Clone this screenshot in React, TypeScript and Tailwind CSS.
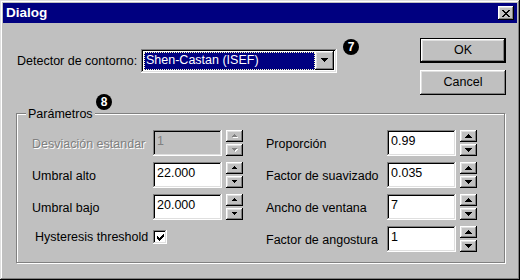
const raised =
  "bg-[#c0c0c0] shadow-[inset_-1px_-1px_#000,inset_1px_1px_#fff,inset_-2px_-2px_#808080,inset_2px_2px_#dfdfdf]";
const sunken =
  "shadow-[inset_-1px_-1px_#fff,inset_1px_1px_#808080,inset_-2px_-2px_#dfdfdf,inset_2px_2px_#000]";

function Badge({ n }: { n: string }) {
  return (
    <div className="w-[16px] h-[16px] rounded-full bg-black text-white font-bold text-[12px] leading-none flex items-center justify-center">
      {n}
    </div>
  );
}

function Arrow({ up, big, disabled }: { up?: boolean; big?: boolean; disabled?: boolean }) {
  const w = big ? 7 : 5;
  const h = big ? 4 : 3;
  const pts = up ? `0,${h} ${w},${h} ${w / 2},0` : `0,0 ${w},0 ${w / 2},${h}`;
  return (
    <svg width={w + 1} height={h + 1} viewBox={`0 0 ${w + 1} ${h + 1}`} shapeRendering="crispEdges">
      {disabled && <polygon points={pts} fill="#fff" transform="translate(1,1)" />}
      <polygon points={pts} fill={disabled ? "#808080" : "#000"} />
    </svg>
  );
}

function Spinner({ big, disabled }: { big?: boolean; disabled?: boolean }) {
  return (
    <div className="flex flex-col gap-[2px] w-[17px]">
      <div className={`h-[12px] flex items-center justify-center ${raised}`}>
        <Arrow up big={big} disabled={disabled} />
      </div>
      <div className={`h-[12px] flex items-center justify-center ${raised}`}>
        <Arrow big={big} disabled={disabled} />
      </div>
    </div>
  );
}

function Field({
  label,
  value,
  disabled,
  right,
}: {
  label: string;
  value: string;
  disabled?: boolean;
  right?: boolean;
}) {
  return (
    <div className="flex items-center h-[26px]">
      <span
        className={`w-[121px] pt-[3px] whitespace-nowrap ${
          disabled ? "text-[#808080] [text-shadow:1px_1px_0_#fff]" : "text-black"
        }`}
      >
        {label}
      </span>
      <div
        className={`w-[69px] h-[26px] flex items-center pl-[4px] pb-[3px] ${sunken} ${
          disabled ? "bg-[#c0c0c0] text-[#808080]" : "bg-white text-black"
        }`}
      >
        {value}
      </div>
      <div className={right ? "ml-[4px]" : "ml-[4px]"}>
        <Spinner big={right} disabled={disabled} />
      </div>
    </div>
  );
}

export default function App() {
  return (
    <div className="w-[520px] h-[280px] bg-[#c0c0c0] p-[3px] flex flex-col font-['Liberation_Sans',Arial,sans-serif] text-[12.5px] text-black shadow-[inset_-1px_-1px_#000,inset_1px_1px_#dfdfdf,inset_-2px_-2px_#808080,inset_2px_2px_#fff]">
      {/* Title bar */}
      <div className="h-[20px] bg-[#000080] flex items-center pl-[3px] pr-[3px]">
        <span className="text-white font-bold text-[13.5px]">Dialog</span>
        <div className={`ml-auto w-[16px] h-[14px] flex items-center justify-center ${raised}`}>
          <svg width="8" height="7" viewBox="0 0 8 7" shapeRendering="crispEdges">
            <path d="M0 0h2v1h1v1h2V1h1V0h2v1H7v1H6v1H5v1h1v1h1v1h1v1H6V6H5V5H3v1H2v1H0V6h1V5h1V4h1V3H2V2H1V1H0z" fill="#000" />
          </svg>
        </div>
      </div>

      <div className="flex flex-col pl-[13px] pr-[12px]">
        {/* Top row */}
        <div className="flex mt-[15px]">
          <div className="flex items-center mt-[11px] ml-px h-[24px]">
            <span className="w-[124px] whitespace-nowrap">Detector de contorno:</span>
            <div className={`w-[196px] h-[24px] p-[2px] bg-white ${sunken}`}>
              <div className="flex h-full p-px">
                <div className="flex-1 bg-[#000080] text-white outline-1 outline-dotted outline-[#ffffc0] -outline-offset-1 pl-[2px] flex items-center pb-[1px]">
                  Shen-Castan (ISEF)
                </div>
                <div className={`w-[19px] h-[19px] -mt-px flex items-center justify-center ${raised}`}>
                  <Arrow big />
                </div>
              </div>
            </div>
          </div>
          <div className="ml-[6px] mt-px">
            <Badge n="7" />
          </div>
          <div className="ml-auto -mr-px flex flex-col gap-[7px]">
            <div className="w-[86px] h-[25px] border border-black">
              <div className={`w-full h-full flex items-center justify-center ${raised}`}>OK</div>
            </div>
            <div className={`w-[86px] h-[25px] flex items-center justify-center ${raised}`}>Cancel</div>
          </div>
        </div>

        {/* Group box */}
        <div className="relative mt-[18px] h-[150px] border border-[#808080] shadow-[1px_1px_0_#fff,inset_1px_1px_0_#fff]">
          <span className="absolute -top-[9px] left-[9px] px-[2px] bg-[#c0c0c0]">Parámetros</span>
          <div className="absolute -top-[20px] left-[79px]">
            <Badge n="8" />
          </div>

          <div className="flex pl-[15px] pt-[16px]">
            <div className="flex flex-col gap-[6px]">
              <Field label="Desviación estandar" value="1" disabled />
              <Field label="Umbral alto" value="22.000" />
              <Field label="Umbral bajo" value="20.000" />
              <div className="flex items-center h-[26px] pb-[4px]">
                <span className="w-[121px] pl-[3px] whitespace-nowrap">Hysteresis threshold</span>
                <div className={`w-[14px] h-[14px] bg-white flex items-center justify-center ${sunken}`}>
                  <svg width="7" height="7" viewBox="0 0 7 7" shapeRendering="crispEdges">
                    <path d="M6 0h1v3H6v1H5v1H4v1H3v1H2V6H1V5H0V2h1v1h1v1h1V3h1V2h1V1h1z" fill="#000" />
                  </svg>
                </div>
              </div>
            </div>
            <div className="flex flex-col gap-[6px] ml-[23px]">
              <Field label="Proporción" value="0.99" right />
              <Field label="Factor de suavizado" value="0.035" right />
              <Field label="Ancho de ventana" value="7" right />
              <Field label="Factor de angostura" value="1" right />
            </div>
          </div>
        </div>
      </div>
    </div>
  );
}
